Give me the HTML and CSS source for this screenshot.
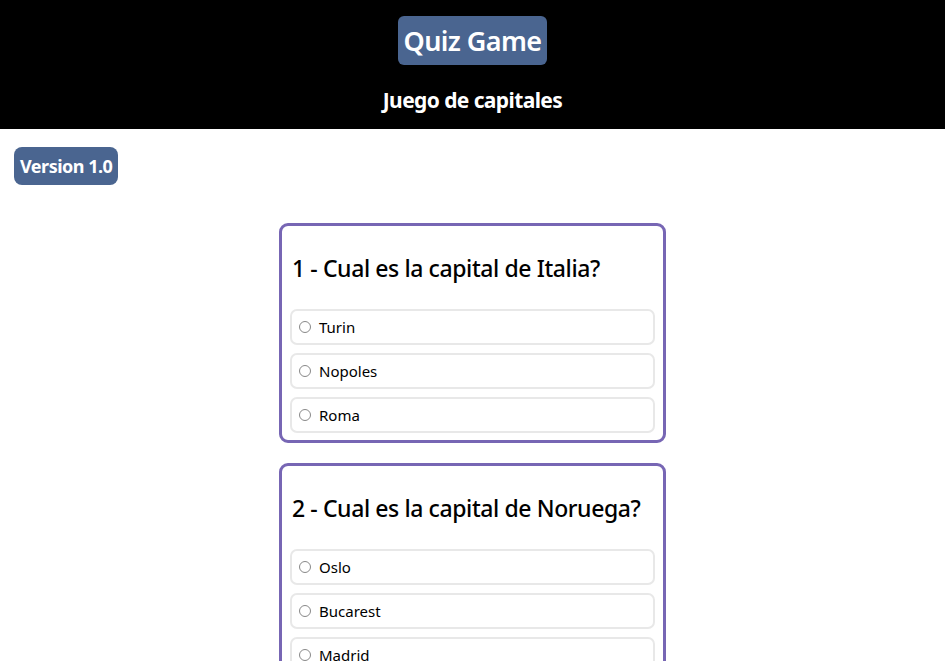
FILE: index.html
```html
<!DOCTYPE html>
<html lang="es">
<head>
<meta charset="utf-8">
<title>Quiz Game</title>
<link rel="stylesheet" href="styles.css">
</head>
<body>
<header class="top">
  <h1 class="title">Quiz Game</h1>
  <h2 class="subtitle">Juego de capitales</h2>
</header>
<div class="version-row"><span class="version">Version 1.0</span></div>
<main class="quiz">
  <section class="card">
    <h3 class="question">1 - Cual es la capital de Italia?</h3>
    <label class="option"><span class="radio"></span>Turin</label>
    <label class="option"><span class="radio"></span>Nopoles</label>
    <label class="option"><span class="radio"></span>Roma</label>
  </section>
  <section class="card">
    <h3 class="question">2 - Cual es la capital de Noruega?</h3>
    <label class="option"><span class="radio"></span>Oslo</label>
    <label class="option"><span class="radio"></span>Bucarest</label>
    <label class="option"><span class="radio"></span>Madrid</label>
  </section>
</main>
</body>
</html>
```
FILE: styles.css
```css
* { box-sizing: border-box; }
body {
  margin: 0;
  background: #fff;
  font-family: "Noto Sans", "Open Sans", sans-serif;
  color: #000;
}
.top {
  background: #000;
  height: 129px;
  display: flex;
  flex-direction: column;
  align-items: center;
  padding-top: 16px;
}
.title {
  margin: 0;
  background: #4a6590;
  color: #fff;
  font-size: 27px;
  font-weight: 600;
  line-height: 49px;
  height: 49px;
  padding: 0 6px;
  border-radius: 6px;
  letter-spacing: -0.6px;
}
.subtitle {
  margin: 20px 0 0;
  color: #fff;
  font-size: 21px;
  font-weight: 700;
  line-height: 30px;
  letter-spacing: -0.6px;
}
.version-row {
  padding: 18px 14px 0;
}
.version {
  display: inline-block;
  background: #4a6590;
  color: #fff;
  font-size: 18px;
  font-weight: 700;
  line-height: 38px;
  height: 38px;
  padding: 0 6px;
  border-radius: 8px;
  letter-spacing: -0.5px;
}
.quiz {
  display: flex;
  flex-direction: column;
  align-items: center;
  gap: 20px;
  margin-top: 38px;
}
.card {
  width: 387px;
  border: 3px solid #7766b4;
  border-radius: 9px;
  padding: 0 8px 7px;
  display: flex;
  flex-direction: column;
  gap: 8px;
}
.question {
  margin: 0;
  padding: 27px 2px 18px;
  font-size: 23px;
  font-weight: 500;
  line-height: 30px;
  letter-spacing: -0.4px;
}
.option {
  display: flex;
  align-items: center;
  height: 36px;
  border: 2px solid #e8e8e8;
  border-radius: 7px;
  padding-left: 7px;
  font-size: 15px;
  gap: 8px;
}
.radio {
  width: 12px;
  height: 12px;
  border: 1px solid #888;
  border-radius: 50%;
  background: #fff;
}
```
